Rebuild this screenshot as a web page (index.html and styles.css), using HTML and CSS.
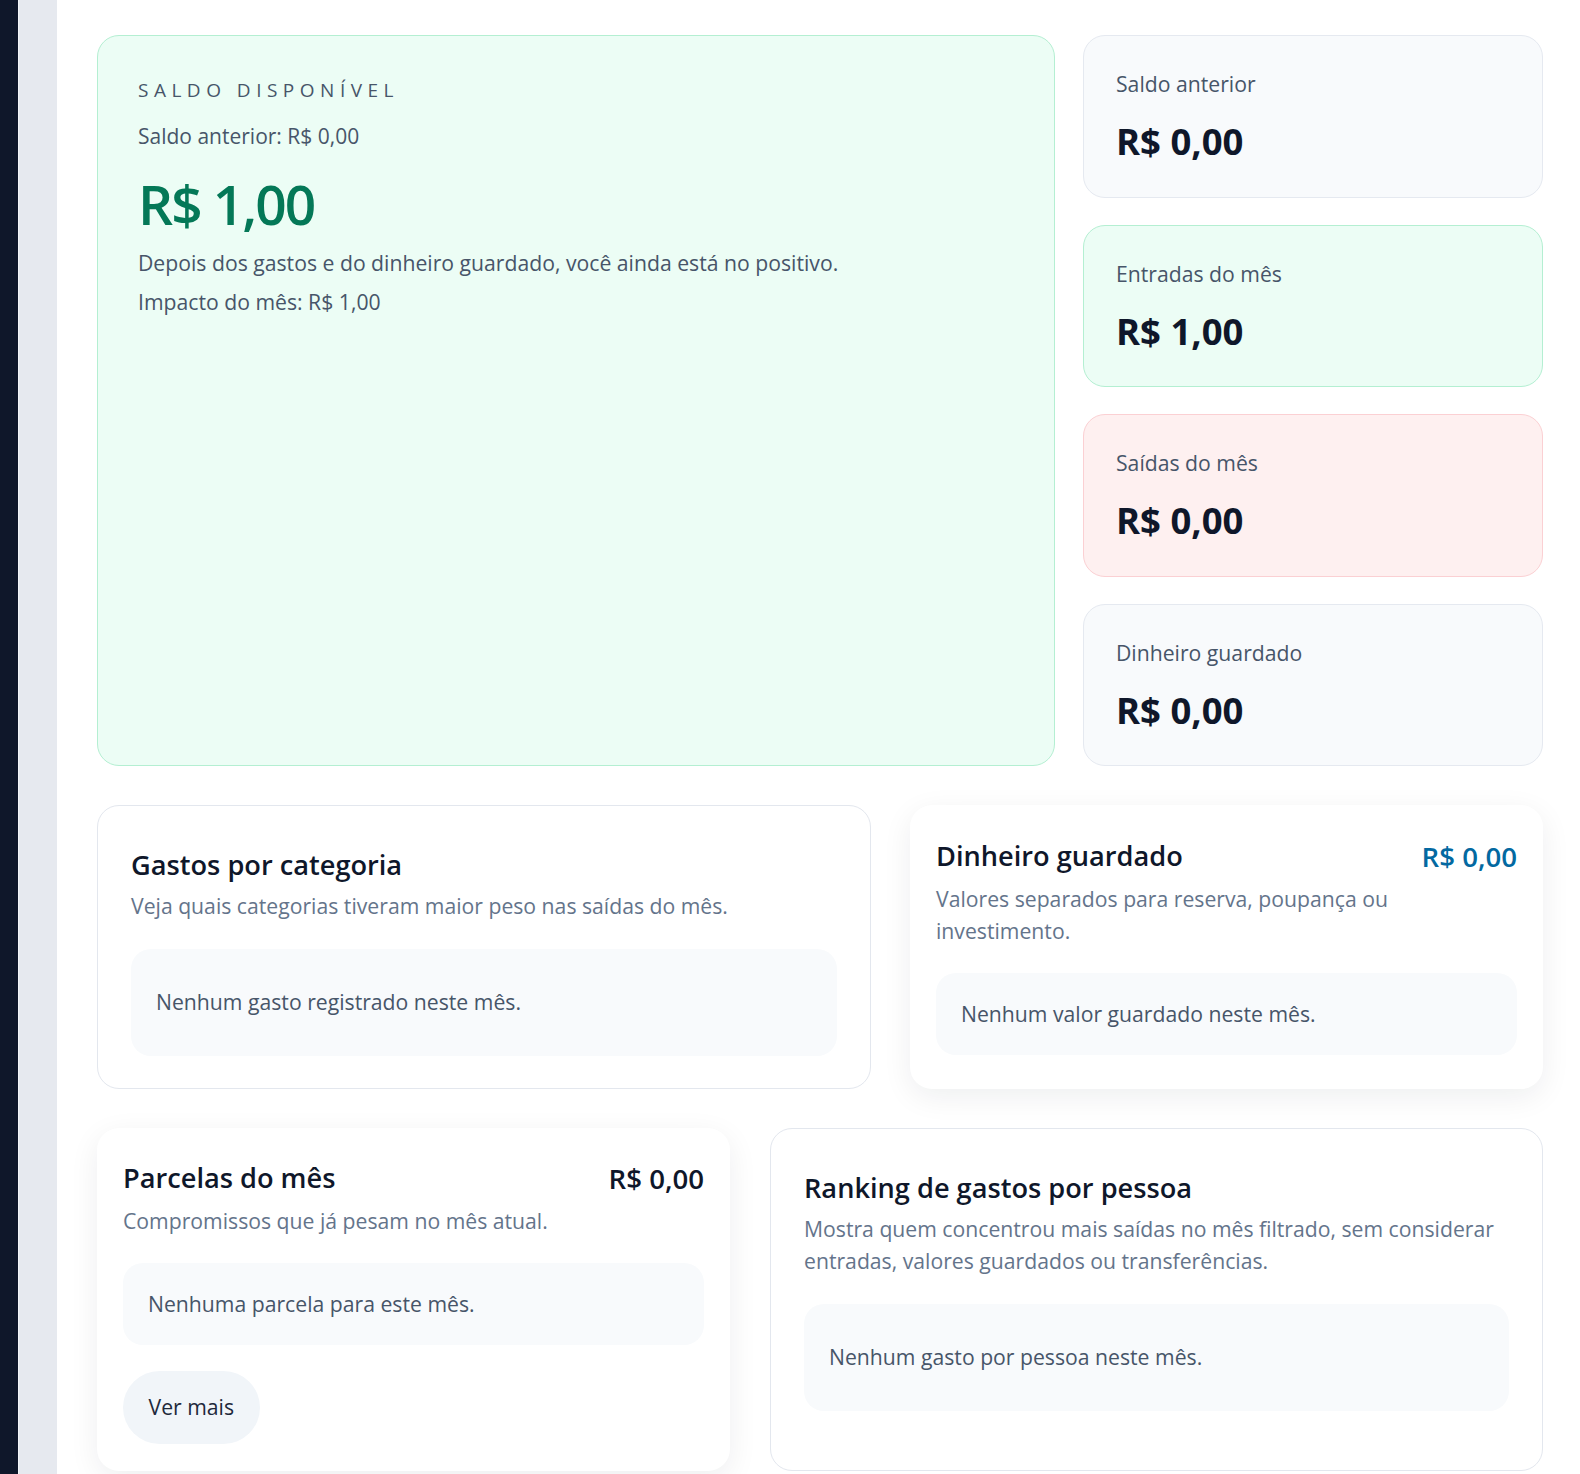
FILE: index.html
```html
<!DOCTYPE html>
<html lang="pt-BR">
<head>
<meta charset="utf-8">
<title>Resumo do mês</title>
<link rel="stylesheet" href="styles.css">
</head>
<body>
<div class="app">
  <aside class="sidebar"></aside>
  <div class="rail"></div>
  <main class="main">
    <section class="row row-top">
      <article class="hero">
        <p class="eyebrow">SALDO DISPONÍVEL</p>
        <p class="hero-prev">Saldo anterior: R$ 0,00</p>
        <p class="hero-value">R$ 1,00</p>
        <p class="hero-text">Depois dos gastos e do dinheiro guardado, você ainda está no positivo.</p>
        <p class="hero-impact">Impacto do mês: R$ 1,00</p>
      </article>
      <div class="stats">
        <div class="stat stat-neutral">
          <p class="stat-label">Saldo anterior</p>
          <p class="stat-value">R$ 0,00</p>
        </div>
        <div class="stat stat-green">
          <p class="stat-label">Entradas do mês</p>
          <p class="stat-value">R$ 1,00</p>
        </div>
        <div class="stat stat-red">
          <p class="stat-label">Saídas do mês</p>
          <p class="stat-value">R$ 0,00</p>
        </div>
        <div class="stat stat-neutral">
          <p class="stat-label">Dinheiro guardado</p>
          <p class="stat-value">R$ 0,00</p>
        </div>
      </div>
    </section>

    <section class="row row-mid">
      <article class="panel panel-bordered">
        <h3 class="panel-title">Gastos por categoria</h3>
        <p class="panel-desc">Veja quais categorias tiveram maior peso nas saídas do mês.</p>
        <div class="empty empty-tall">Nenhum gasto registrado neste mês.</div>
      </article>
      <article class="panel panel-shadow">
        <div class="panel-head">
          <div class="panel-head-text">
            <h3 class="panel-title">Dinheiro guardado</h3>
            <p class="panel-desc">Valores separados para reserva, poupança ou investimento.</p>
          </div>
          <span class="panel-amount amount-blue">R$ 0,00</span>
        </div>
        <div class="empty">Nenhum valor guardado neste mês.</div>
      </article>
    </section>

    <section class="row row-bottom">
      <article class="panel panel-shadow">
        <div class="panel-head">
          <div class="panel-head-text">
            <h3 class="panel-title">Parcelas do mês</h3>
            <p class="panel-desc">Compromissos que já pesam no mês atual.</p>
          </div>
          <span class="panel-amount">R$ 0,00</span>
        </div>
        <div class="empty">Nenhuma parcela para este mês.</div>
        <button class="more-btn" type="button">Ver mais</button>
      </article>
      <article class="panel panel-bordered">
        <h3 class="panel-title">Ranking de gastos por pessoa</h3>
        <p class="panel-desc">Mostra quem concentrou mais saídas no mês filtrado, sem considerar entradas, valores guardados ou transferências.</p>
        <div class="empty empty-tall">Nenhum gasto por pessoa neste mês.</div>
      </article>
    </section>
  </main>
</div>
</body>
</html>
```

FILE: styles.css
```css
* {
  box-sizing: border-box;
}

html, body {
  margin: 0;
  padding: 0;
  background: #ffffff;
  font-family: "Open Sans", "Noto Sans", "DejaVu Sans", sans-serif;
  color: #0f172a;
}

p, h3 {
  margin: 0;
}

.app {
  display: flex;
  min-height: 100vh;
}

.sidebar {
  width: 18px;
  flex: 0 0 18px;
  background: #0f172a;
}

.rail {
  width: 39px;
  flex: 0 0 39px;
  background: #e6e9ef;
  border-left: 1px solid #f4f6f9;
}

.main {
  flex: 1;
  display: flex;
  flex-direction: column;
  gap: 39px;
  padding: 35px 37px 0 40px;
}

.row {
  display: grid;
}

.row-top {
  grid-template-columns: 958px 460px;
  column-gap: 28px;
}

.row-mid {
  grid-template-columns: 774px 633px;
  column-gap: 39px;
}

.row-bottom {
  grid-template-columns: 633px 773px;
  column-gap: 40px;
}

/* Hero */
.hero {
  background: #ecfdf5;
  border: 1.5px solid #b4efd2;
  border-radius: 22px;
  padding: 41px 40px;
}

.eyebrow {
  font-size: 19px;
  line-height: 26px;
  letter-spacing: 5.5px;
  color: #475569;
}

.hero-prev {
  margin-top: 18px;
  font-size: 21px;
  line-height: 30px;
  color: #475569;
}

.hero-value {
  margin-top: 21px;
  font-size: 55px;
  line-height: 64px;
  font-weight: 600;
  letter-spacing: -2px;
  color: #047857;
}

.hero-text {
  margin-top: 12px;
  font-size: 21.2px;
  line-height: 30px;
  color: #475569;
}

.hero-impact {
  margin-top: 9px;
  font-size: 21.2px;
  line-height: 30px;
  color: #475569;
}

/* Stat cards */
.stats {
  display: grid;
  grid-template-rows: repeat(4, 1fr);
  row-gap: 27px;
}

.stat {
  border-radius: 22px;
  border: 1.5px solid #e5e9f0;
  padding: 33px 32px 33.5px;
  display: flex;
  flex-direction: column;
  gap: 20px;
}

.stat-neutral {
  background: #f8fafc;
}

.stat-green {
  background: #ecfdf5;
  border-color: #b4efd2;
}

.stat-red {
  background: #fef0f0;
  border-color: #fbd0d3;
}

.stat-label {
  font-size: 21.2px;
  line-height: 30px;
  color: #475569;
}

.stat-value {
  font-size: 36.5px;
  line-height: 44px;
  font-weight: 700;
  color: #0f172a;
}

/* Panels */
.panel {
  background: #ffffff;
  border-radius: 22px;
  display: flex;
  flex-direction: column;
  align-items: stretch;
}

.panel-bordered {
  border: 1.5px solid #e3e7ee;
  padding: 41px 33px 32px;
}

.panel-shadow {
  padding: 32.5px 26px 27px;
  box-shadow: 0 8px 30px rgba(15, 23, 42, 0.07);
}

.panel-head {
  display: flex;
  align-items: flex-start;
  justify-content: space-between;
  gap: 20px;
}

.panel-head-text {
  flex: 1;
  min-width: 0;
}

.panel-title {
  font-size: 27.2px;
  line-height: 36px;
  font-weight: 600;
  color: #0f172a;
}

.panel-desc {
  margin-top: 7px;
  font-size: 21.2px;
  line-height: 32.2px;
  color: #64748b;
}

.panel-shadow .panel-desc {
  margin-top: 9px;
}

.panel-amount {
  font-size: 27.6px;
  line-height: 36px;
  font-weight: 600;
  color: #0f172a;
  white-space: nowrap;
}

.amount-blue {
  color: #0369a1;
}

.empty {
  margin-top: 26px;
  background: #f8fafc;
  border-radius: 20px;
  padding: 26px 25px;
  font-size: 21.2px;
  line-height: 30px;
  color: #475569;
}

.panel-bordered .empty {
  margin-top: 26.5px;
}

.empty-tall {
  padding: 38.5px 25px;
}

.more-btn {
  align-self: flex-start;
  margin-top: 26px;
  border: none;
  background: #f1f5f9;
  border-radius: 999px;
  padding: 21px 25.5px;
  font-family: inherit;
  font-size: 21.2px;
  line-height: 30.5px;
  color: #1e293b;
  cursor: pointer;
}
```
